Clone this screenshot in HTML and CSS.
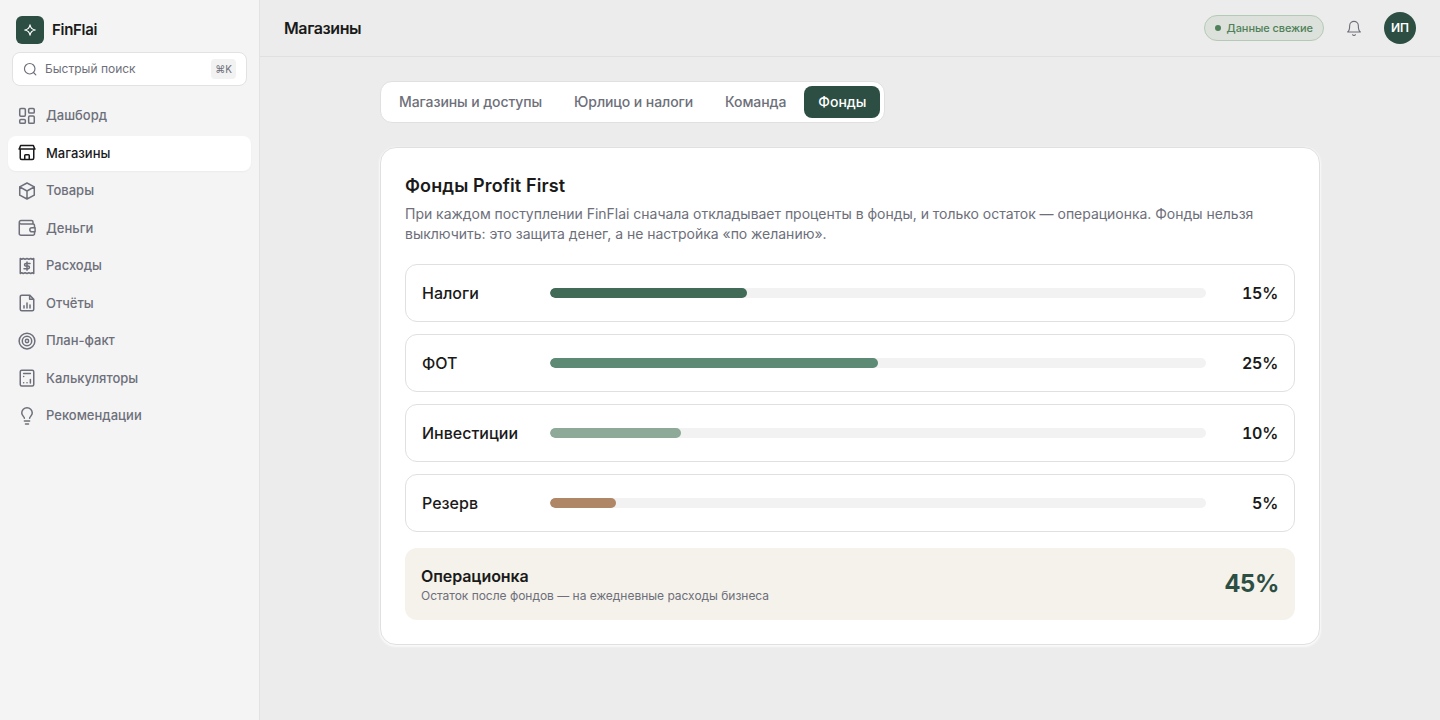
FILE: index.html
```html
<!DOCTYPE html>
<html lang="ru">
<head>
    <meta charset="UTF-8">
    <meta name="viewport" content="width=device-width, initial-scale=1.0">
    <title>FinFlai — Магазины</title>
    <link rel="stylesheet" href="styles.css">
</head>
<body>
    <aside class="sidebar">
        <div class="brand">
            <span class="brand-logo">
                <svg viewBox="0 0 24 24"><path d="M12 3C12.800 8.500 15.500 11.200 21 12C15.500 12.800 12.800 15.500 12 21C11.200 15.500 8.500 12.800 3 12C8.500 11.200 11.200 8.500 12 3Z"/></svg>
            </span>
            <span class="brand-name">FinFlai</span>
        </div>

        <div class="search">
            <svg class="icon-sm" viewBox="0 0 24 24"><circle cx="11.5" cy="11.5" r="9"/><path d="M18 18l4 4"/></svg>
            <span>Быстрый поиск</span>
            <kbd>⌘K</kbd>
        </div>

        <nav class="nav">
            <a href="#">
                <svg viewBox="0 0 24 24"><rect x="2.300" y="2" width="7.500" height="10.300" rx="1.500"/><rect x="14.200" y="2" width="7.500" height="6" rx="1.500"/><rect x="2.300" y="16.500" width="7.500" height="5.300" rx="1.500"/><rect x="14.200" y="12" width="7.500" height="9.800" rx="1.500"/></svg>
                Дашборд
            </a>
            <a href="#" class="active">
                <svg viewBox="0 0 24 24"><path d="M3 7v11.500a2 2 0 0 0 2 2h14a2 2 0 0 0 2-2V7M1.300 6.800h21.400M1.800 6.500l1.700-4.500h17l1.700 4.500M9 20.500v-5.200a1 1 0 0 1 1-1h4a1 1 0 0 1 1 1v5.200"/></svg>
                Магазины
            </a>
            <a href="#">
                <svg viewBox="0 0 24 24"><path d="M12 1.300l9.700 5.200v11L12 22.700l-9.700-5.200v-11zM2.300 6.500L12 12l9.700-5.500M12 12v10.700"/></svg>
                Товары
            </a>
            <a href="#">
                <svg viewBox="0 0 24 24"><path d="M20 6.500V4a2 2 0 0 0-2-2H4a2.250 2.250 0 0 0 0 4.500h16a2 2 0 0 1 2 2V11M1.700 4.500v15A2.200 2.200 0 0 0 4 21.700H19.800a2.200 2.200 0 0 0 2.200-2.200V17.500"/><path d="M18.500 11.500H22.800v5.500h-4.300a2.750 2.750 0 0 1 0-5.500z"/></svg>
                Деньги
            </a>
            <a href="#">
                <svg viewBox="0 0 24 24"><path d="M3 2l2 1 2-1 2.500 1L12 2l2.500 1L17 2l2 1 2-1v20l-2-1-2 1-2.500-1-2.500 1-2.500-1L7 22l-2-1-2 1z"/><path d="M16 8.500h-5.500a1.750 1.750 0 0 0 0 3.500h3a1.750 1.750 0 0 1 0 3.500H8M12 6.500v11"/></svg>
                Расходы
            </a>
            <a href="#">
                <svg viewBox="0 0 24 24"><path d="M15.500 1.500H5a2 2 0 0 0-2 2v16.700a2 2 0 0 0 2 2h14a2 2 0 0 0 2-2V7zM15.500 1.500v5.500H21M8 18.500v-3M12 18.500v-6.500M16 18.500v-4"/></svg>
                Отчёты
            </a>
            <a href="#">
                <svg viewBox="0 0 24 24"><circle cx="12" cy="12" r="10.500"/><circle cx="12" cy="12" r="6.300"/><circle cx="12" cy="12" r="2.200"/></svg>
                План-факт
            </a>
            <a href="#">
                <svg viewBox="0 0 24 24"><rect x="3" y="1.500" width="18" height="21" rx="2"/><path d="M7.500 6h9M16.500 14v4.500M7.500 10h.1M7.500 18.300h.1M12 18.300h.1"/></svg>
                Калькуляторы
            </a>
            <a href="#">
                <svg viewBox="0 0 24 24"><path d="M8.500 15c0-2-3.500-3.500-3.500-7a7 7 0 0 1 14 0c0 3.500-3.500 5-3.500 7M8.500 18.700h7M10 22.700h4"/></svg>
                Рекомендации
            </a>
        </nav>
    </aside>

    <div class="page">
        <header class="topbar">
            <h1>Магазины</h1>
            <div class="status"><span class="dot"></span>Данные свежие</div>
            <svg class="bell" viewBox="0 0 24 24"><path d="M18.500 8.500a6.500 6.500 0 0 0-13 0c0 7-3 9.500-3 9.500h19s-3-2.500-3-9.500M14 22a2.300 2.300 0 0 1-4 0"/></svg>
            <div class="avatar">ИП</div>
        </header>

        <main class="content">
            <div class="tabs">
                <button>Магазины и доступы</button>
                <button>Юрлицо и налоги</button>
                <button>Команда</button>
                <button class="active">Фонды</button>
            </div>

            <section class="card">
                <h2>Фонды Profit First</h2>
                <p class="description">При каждом поступлении FinFlai сначала откладывает проценты в фонды, и только остаток — операционка. Фонды нельзя выключить: это защита денег, а не настройка «по желанию».</p>

                <div class="funds">
                    <div class="fund">
                        <span class="fund-name">Налоги</span>
                        <div class="bar"><div class="fill tax" style="width: 30%"></div></div>
                        <span class="percent">15%</span>
                    </div>
                    <div class="fund">
                        <span class="fund-name">ФОТ</span>
                        <div class="bar"><div class="fill payroll" style="width: 50%"></div></div>
                        <span class="percent">25%</span>
                    </div>
                    <div class="fund">
                        <span class="fund-name">Инвестиции</span>
                        <div class="bar"><div class="fill invest" style="width: 20%"></div></div>
                        <span class="percent">10%</span>
                    </div>
                    <div class="fund">
                        <span class="fund-name">Резерв</span>
                        <div class="bar"><div class="fill reserve" style="width: 10%"></div></div>
                        <span class="percent">5%</span>
                    </div>
                </div>

                <div class="operating">
                    <div>
                        <h3>Операционка</h3>
                        <p>Остаток после фондов — на ежедневные расходы бизнеса</p>
                    </div>
                    <span class="total">45%</span>
                </div>
            </section>
        </main>
    </div>
</body>
</html>
```
FILE: styles.css
```css
* {
    box-sizing: border-box;
}
body {
    margin: 0;
    display: flex;
    height: 100vh;
    font-family: Inter, "Liberation Sans", sans-serif;
    color: #1a1a1a;
    background: #ececec;
}
h1, h2, h3, p {
    margin: 0;
}
svg {
    flex: none;
    width: 18px;
    height: 18px;
    fill: none;
    stroke: currentColor;
    stroke-width: 2;
    stroke-linecap: round;
    stroke-linejoin: round;
}

/* Sidebar */
.sidebar {
    width: 260px;
    flex: none;
    background: #f4f4f4;
    border-right: 1px solid #e2e2e2;
}
.brand {
    display: flex;
    align-items: center;
    gap: 8px;
    padding: 16px 16px 8px;
}
.brand-logo {
    display: flex;
    align-items: center;
    justify-content: center;
    width: 28px;
    height: 28px;
    border-radius: 6px;
    background: #2d4f43;
    color: #fff;
}
.brand-logo svg {
    width: 14px;
    height: 14px;
}
.brand-name {
    font-size: 15px;
    font-weight: 600;
    line-height: 18px;
    letter-spacing: -0.3px;
    padding-bottom: 1px;
}
.search {
    display: flex;
    align-items: center;
    gap: 8px;
    height: 34px;
    margin: 0 12px 12px;
    padding: 0 10px;
    border: 1px solid #e2e2e2;
    border-radius: 8px;
    background: #fff;
    color: #6d6f7a;
    font-size: 12px;
}
.search span {
    padding-bottom: 1px;
}
.search .icon-sm {
    width: 14px;
    height: 14px;
}
.search kbd {
    margin-left: auto;
    padding: 0 4px;
    border-radius: 4px;
    background: #f2f2f2;
    font-family: inherit;
    font-size: 10px;
    line-height: 20px;
}
.nav {
    display: flex;
    flex-direction: column;
    gap: 2px;
    padding: 0 8px;
}
.nav a {
    display: flex;
    align-items: center;
    gap: 10px;
    padding: 8px 10px;
    border-radius: 8px;
    color: #6d6f7a;
    font-size: 13px;
    font-weight: 500;
    line-height: 19.5px;
    text-decoration: none;
}
.nav a.active {
    background: #fff;
    color: #1a1a1a;
    box-shadow: 0 1px 2px rgba(0, 0, 0, 0.04);
}

/* Top bar */
.page {
    flex: 1;
}
.topbar {
    display: flex;
    align-items: center;
    height: 57px;
    padding: 0 24px;
    border-bottom: 1px solid #e0e0e0;
}
.topbar h1 {
    margin-right: auto;
    font-size: 16px;
    font-weight: 600;
    letter-spacing: -0.4px;
}
.status {
    display: flex;
    align-items: center;
    gap: 6px;
    height: 26px;
    padding: 0 10px;
    border: 1px solid #b4cab7;
    border-radius: 13px;
    background: #dce1dc;
    color: #4f8058;
    font-size: 11px;
    font-weight: 500;
    letter-spacing: -0.08px;
}
.dot {
    width: 6px;
    height: 6px;
    border-radius: 50%;
    background: #4f8058;
}
.bell {
    width: 16px;
    height: 16px;
    margin: 0 22px;
    color: #6d6f7a;
    stroke-width: 1.7;
}
.avatar {
    width: 32px;
    height: 32px;
    border-radius: 50%;
    background: #2d4f43;
    color: #fff;
    font-size: 12px;
    font-weight: 600;
    line-height: 32px;
    text-align: center;
}

/* Content */
.content {
    width: 940px;
    margin: 0 auto;
    padding-top: 24px;
}
.tabs {
    display: flex;
    gap: 4px;
    width: fit-content;
    padding: 4px;
    margin-bottom: 24px;
    border: 1px solid #e0e0e0;
    border-radius: 12px;
    background: #fff;
}
.tabs button {
    height: 32px;
    padding: 0 14px 2px;
    border: none;
    border-radius: 8px;
    background: none;
    color: #6d6f7a;
    font-family: inherit;
    font-size: 14px;
    font-weight: 500;
    letter-spacing: -0.09px;
}
.tabs button.active {
    background: #2d4f43;
    color: #fff;
    letter-spacing: 0;
}
.card {
    padding: 24px;
    border: 1px solid #e0e0e0;
    border-radius: 16px;
    background: #fff;
    box-shadow: 0 1px 2px 1px rgba(255, 255, 255, 0.7);
}
.card h2 {
    font-size: 18px;
    font-weight: 600;
    line-height: 28px;
    letter-spacing: 0.12px;
}
.description {
    margin: 4px 0 20px;
    color: #6d6f7a;
    font-size: 14px;
    line-height: 20px;
    letter-spacing: -0.025px;
}
.funds {
    display: flex;
    flex-direction: column;
    gap: 12px;
}
.fund {
    display: flex;
    align-items: center;
    gap: 16px;
    height: 58px;
    padding: 0 16px;
    border: 1px solid #e0e0e0;
    border-radius: 12px;
}
.fund-name {
    width: 112px;
    font-weight: 500;
}
.bar {
    flex: 1;
    height: 10px;
    border-radius: 5px;
    background: #f2f2f2;
    overflow: hidden;
}
.fill {
    height: 100%;
    border-radius: 5px;
}
.tax {
    background: #416b57;
}
.payroll {
    background: #5c8a74;
}
.invest {
    background: #8ea998;
}
.reserve {
    background: #b08766;
}
.percent {
    width: 56px;
    font-weight: 600;
    text-align: right;
    letter-spacing: -0.25px;
    font-variant-numeric: tabular-nums;
}
.operating {
    display: flex;
    align-items: center;
    justify-content: space-between;
    margin-top: 16px;
    padding: 16px;
    border-radius: 12px;
    background: #f5f2eb;
}
.operating h3 {
    font-size: 16px;
    font-weight: 600;
    line-height: 24px;
    letter-spacing: -0.08px;
}
.operating p {
    color: #6d6f7a;
    font-size: 12px;
    line-height: 16px;
    letter-spacing: -0.02px;
}
.total {
    color: #2d4f43;
    font-size: 24px;
    font-weight: 700;
    line-height: 32px;
    letter-spacing: -0.4px;
    font-variant-numeric: tabular-nums;
}
```
